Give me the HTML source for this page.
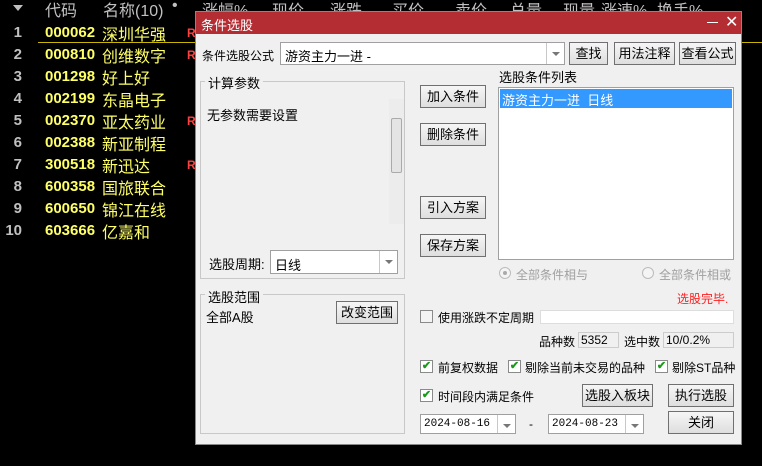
<!DOCTYPE html>
<html><head><meta charset="utf-8"><style>
*{margin:0;padding:0;box-sizing:border-box}
body{width:762px;height:466px;background:#000;position:relative;overflow:hidden;font-family:"Liberation Sans","Noto Sans CJK SC",sans-serif;font-size:12px}
.a{position:absolute;white-space:nowrap}
.hd{color:#c0c0c0;font-size:16px;top:-3px}
.rn{color:#c0c0c0;font-size:15px;font-weight:bold;width:22px;text-align:right;left:0}
.cd{color:#ffff66;font-size:15px;font-weight:bold;left:45px;font-family:"Liberation Sans",sans-serif}
.nm{color:#ffff66;font-size:16px;left:102px}
.r{color:#ff4040;font-size:12px;font-weight:bold;left:187px}
.dlg{position:absolute;left:195px;top:11px;width:547px;height:434px;background:#f0f0f0;border:1px solid #888}
.tb{position:absolute;left:0;top:0;width:545px;height:22px;background:#b32d33;color:#fff;font-size:13px}
.btn{position:absolute;height:23px;border:1px solid #707070;background:linear-gradient(#f6f6f6,#dedede);text-align:center;line-height:21px;font-size:13px;color:#000}
.box{position:absolute;background:#fff;border:1px solid #a0a0a0}
.grp{position:absolute;border:1px solid #c8c8c8}
.t{position:absolute;white-space:nowrap;font-size:12px;color:#000}
.cb{position:absolute;width:13px;height:13px;border:1px solid #8a8a8a;background:#fff;color:#1a9a1a;font-size:11px;line-height:11px;text-align:center;font-weight:bold}
.dd{position:absolute;right:0;top:0;bottom:0;width:18px;border-left:1px solid #c8c8c8}
.dd:after{content:"";position:absolute;left:5px;top:9px;border:4px solid transparent;border-top:4px solid #777}
</style></head><body>
<div class="a hd" style="left:45px">代码</div>
<div class="a hd" style="left:103px">名称(10)</div>
<div class="a hd" style="left:172px">•</div>
<div class="a hd" style="left:202px">涨幅%</div>
<div class="a hd" style="left:272px">现价</div>
<div class="a hd" style="left:330px">涨跌</div>
<div class="a hd" style="left:392px">买价</div>
<div class="a hd" style="left:455px">卖价</div>
<div class="a hd" style="left:510px">总量</div>
<div class="a hd" style="left:563px">现量</div>
<div class="a hd" style="left:601px">涨速%</div>
<div class="a hd" style="left:657px">换手%</div>
<div class="a" style="left:13px;top:5px;border:5px solid transparent;border-top:6px solid #c0c0c0"></div>
<div class="a" style="left:38px;top:42px;width:724px;height:1px;background:#c8b400"></div>
<div class="a rn" style="top:24px">1</div><div class="a cd" style="top:24px">000062</div><div class="a nm" style="top:21px">深圳华强</div><div class="a r" style="top:26px">R</div>
<div class="a rn" style="top:46px">2</div><div class="a cd" style="top:46px">000810</div><div class="a nm" style="top:43px">创维数字</div><div class="a r" style="top:48px">R</div>
<div class="a rn" style="top:68px">3</div><div class="a cd" style="top:68px">001298</div><div class="a nm" style="top:65px">好上好</div>
<div class="a rn" style="top:90px">4</div><div class="a cd" style="top:90px">002199</div><div class="a nm" style="top:87px">东晶电子</div>
<div class="a rn" style="top:112px">5</div><div class="a cd" style="top:112px">002370</div><div class="a nm" style="top:109px">亚太药业</div><div class="a r" style="top:114px">R</div>
<div class="a rn" style="top:134px">6</div><div class="a cd" style="top:134px">002388</div><div class="a nm" style="top:131px">新亚制程</div>
<div class="a rn" style="top:156px">7</div><div class="a cd" style="top:156px">300518</div><div class="a nm" style="top:153px">新迅达</div><div class="a r" style="top:158px">R</div>
<div class="a rn" style="top:178px">8</div><div class="a cd" style="top:178px">600358</div><div class="a nm" style="top:175px">国旅联合</div>
<div class="a rn" style="top:200px">9</div><div class="a cd" style="top:200px">600650</div><div class="a nm" style="top:197px">锦江在线</div>
<div class="a rn" style="top:222px">10</div><div class="a cd" style="top:222px">603666</div><div class="a nm" style="top:219px">亿嘉和</div>

<div class="dlg">
<div class="tb"><span class="t" style="left:5px;top:3px;color:#fff;font-size:13px">条件选股</span>
<span class="t" style="left:511px;top:10px;width:11px;height:1px;background:#fff"></span>
<span class="t" style="left:529px;top:0px;color:#fff;font-size:16px">✕</span></div>
<div class="t" style="left:6px;top:35px;font-size:12px">条件选股公式</div>
<div class="box" style="left:84px;top:30px;width:285px;height:23px"><span class="t" style="left:4px;top:3px;font-size:13px">游资主力一进 -</span><div class="dd"></div></div>
<div class="btn" style="left:373px;top:30px;width:39px">查找</div>
<div class="btn" style="left:418px;top:30px;width:61px">用法注释</div>
<div class="btn" style="left:483px;top:30px;width:57px">查看公式</div>

<div class="grp" style="left:4px;top:69px;width:205px;height:198px"></div>
<div class="t" style="left:9px;top:61px;background:#f0f0f0;padding:0 3px;font-size:13px">计算参数</div>
<div class="t" style="left:11px;top:93px;font-size:13px">无参数需要设置</div>
<div class="a" style="left:193px;top:87px;width:15px;height:125px;background:#ececec"></div>
<div class="a" style="left:195px;top:106px;width:11px;height:55px;background:#e4e4e4;border:1px solid #aaa;border-radius:2px"></div>
<div class="t" style="left:13px;top:242px;font-size:13px">选股周期:</div>
<div class="box" style="left:74px;top:238px;width:128px;height:24px"><span class="t" style="left:4px;top:4px;font-size:13px">日线</span><div class="dd"></div></div>

<div class="grp" style="left:4px;top:282px;width:205px;height:140px"></div>
<div class="t" style="left:9px;top:275px;background:#f0f0f0;padding:0 3px;font-size:13px">选股范围</div>
<div class="t" style="left:10px;top:295px;font-size:13px">全部A股</div>
<div class="btn" style="left:140px;top:289px;width:62px">改变范围</div>

<div class="btn" style="left:224px;top:73px;width:66px">加入条件</div>
<div class="btn" style="left:224px;top:111px;width:66px">删除条件</div>
<div class="btn" style="left:224px;top:184px;width:66px">引入方案</div>
<div class="btn" style="left:224px;top:222px;width:66px">保存方案</div>

<div class="t" style="left:303px;top:55px;font-size:13px">选股条件列表</div>
<div class="box" style="left:302px;top:75px;width:236px;height:173px"><div class="a" style="left:1px;top:1px;width:232px;height:19px;background:#3399ff;color:#fff;font-size:13px;padding:1px 2px">游资主力一进&nbsp;&nbsp;日线</div></div>

<div class="a" style="left:303px;top:255px;width:12px;height:12px;border-radius:50%;border:1px solid #bbb;background:#f4f4f4"><div class="a" style="left:3px;top:3px;width:4px;height:4px;border-radius:50%;background:#aaa"></div></div>
<div class="t" style="left:320px;top:254px;color:#a0a0a0">全部条件相与</div>
<div class="a" style="left:446px;top:255px;width:12px;height:12px;border-radius:50%;border:1px solid #bbb;background:#f4f4f4"></div>
<div class="t" style="left:463px;top:254px;color:#a0a0a0">全部条件相或</div>
<div class="t" style="left:481px;top:278px;color:#ff2020">选股完毕.</div>

<div class="cb" style="left:224px;top:298px;background:#f4f4f4"></div>
<div class="t" style="left:242px;top:297px">使用涨跌不定周期</div>
<div class="box" style="left:344px;top:298px;width:194px;height:14px;border-color:#ddd"></div>
<div class="t" style="left:343px;top:321px">品种数</div>
<div class="a" style="left:382px;top:320px;width:41px;height:16px;border:1px solid #ccc;font-size:12px;padding-left:2px">5352</div>
<div class="t" style="left:428px;top:321px">选中数</div>
<div class="a" style="left:467px;top:320px;width:71px;height:16px;border:1px solid #ccc;font-size:12px;padding-left:2px">10/0.2%</div>

<div class="cb" style="left:224px;top:348px">✔</div><div class="t" style="left:242px;top:347px">前复权数据</div>
<div class="cb" style="left:312px;top:348px">✔</div><div class="t" style="left:329px;top:347px">剔除当前未交易的品种</div>
<div class="cb" style="left:459px;top:348px">✔</div><div class="t" style="left:476px;top:347px">剔除ST品种</div>
<div class="cb" style="left:224px;top:377px">✔</div><div class="t" style="left:242px;top:376px">时间段内满足条件</div>
<div class="btn" style="left:386px;top:372px;width:71px">选股入板块</div>
<div class="btn" style="left:472px;top:372px;width:66px">执行选股</div>
<div class="box" style="left:224px;top:402px;width:96px;height:20px"><span class="t" style="left:3px;top:3px;font-family:'Liberation Mono',monospace;font-size:11px">2024-08-16</span><div class="dd"></div></div>
<div class="t" style="left:333px;top:405px">-</div>
<div class="box" style="left:352px;top:402px;width:96px;height:20px"><span class="t" style="left:3px;top:3px;font-family:'Liberation Mono',monospace;font-size:11px">2024-08-23</span><div class="dd"></div></div>
<div class="btn" style="left:472px;top:399px;width:66px">关闭</div>
</div>
</body></html>
